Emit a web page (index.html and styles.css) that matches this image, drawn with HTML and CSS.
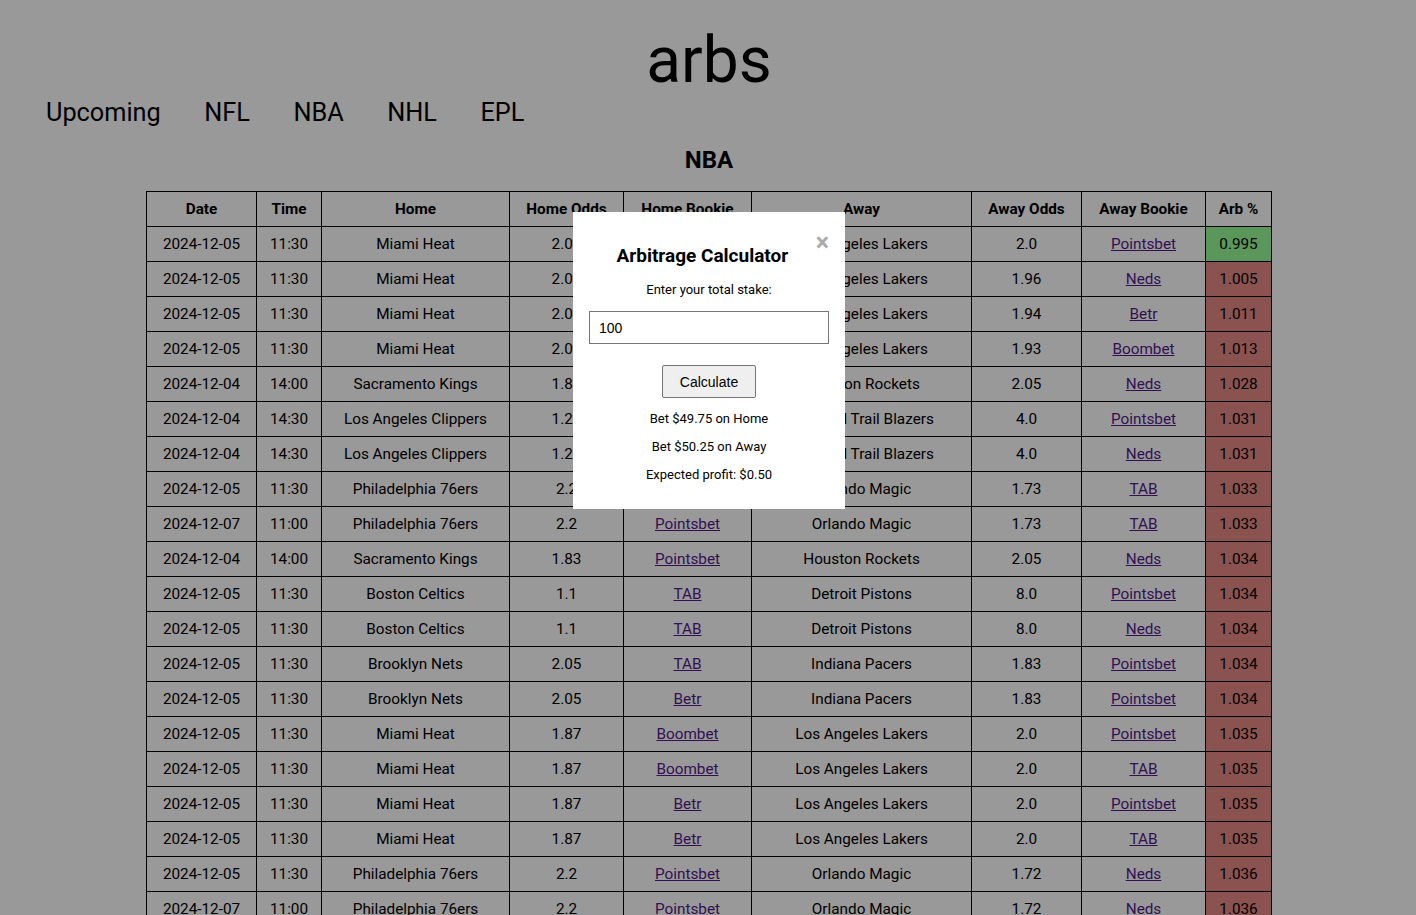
FILE: index.html
```html
<!DOCTYPE html>
<html>
<head>
<meta charset="utf-8">
<title>arbs</title>
<link rel="stylesheet" href="styles.css">
</head>
<body>
<h1 class="title">arbs</h1>
<nav class="nav">
  <a href="#">Upcoming</a>
  <a href="#">NFL</a>
  <a href="#">NBA</a>
  <a href="#">NHL</a>
  <a href="#">EPL</a>
</nav>
<h2 class="league">NBA</h2>
<table class="arbs">
  <colgroup>
    <col class="c-date"><col class="c-time"><col class="c-home"><col class="c-hodds"><col class="c-hbook"><col class="c-away"><col class="c-aodds"><col class="c-abook"><col class="c-arb">
  </colgroup>
  <thead>
    <tr><th>Date</th><th>Time</th><th>Home</th><th>Home Odds</th><th>Home Bookie</th><th>Away</th><th>Away Odds</th><th>Away Bookie</th><th>Arb %</th></tr>
  </thead>
  <tbody>
    <tr><td>2024-12-05</td><td>11:30</td><td>Miami Heat</td><td>2.02</td><td><a href="#">TAB</a></td><td>Los Angeles Lakers</td><td>2.0</td><td><a href="#">Pointsbet</a></td><td class="good">0.995</td></tr>
    <tr><td>2024-12-05</td><td>11:30</td><td>Miami Heat</td><td>2.02</td><td><a href="#">TAB</a></td><td>Los Angeles Lakers</td><td>1.96</td><td><a href="#">Neds</a></td><td class="bad">1.005</td></tr>
    <tr><td>2024-12-05</td><td>11:30</td><td>Miami Heat</td><td>2.02</td><td><a href="#">TAB</a></td><td>Los Angeles Lakers</td><td>1.94</td><td><a href="#">Betr</a></td><td class="bad">1.011</td></tr>
    <tr><td>2024-12-05</td><td>11:30</td><td>Miami Heat</td><td>2.02</td><td><a href="#">TAB</a></td><td>Los Angeles Lakers</td><td>1.93</td><td><a href="#">Boombet</a></td><td class="bad">1.013</td></tr>
    <tr><td>2024-12-04</td><td>14:00</td><td>Sacramento Kings</td><td>1.85</td><td><a href="#">TAB</a></td><td>Houston Rockets</td><td>2.05</td><td><a href="#">Neds</a></td><td class="bad">1.028</td></tr>
    <tr><td>2024-12-04</td><td>14:30</td><td>Los Angeles Clippers</td><td>1.28</td><td><a href="#">TAB</a></td><td>Portland Trail Blazers</td><td>4.0</td><td><a href="#">Pointsbet</a></td><td class="bad">1.031</td></tr>
    <tr><td>2024-12-04</td><td>14:30</td><td>Los Angeles Clippers</td><td>1.28</td><td><a href="#">TAB</a></td><td>Portland Trail Blazers</td><td>4.0</td><td><a href="#">Neds</a></td><td class="bad">1.031</td></tr>
    <tr><td>2024-12-05</td><td>11:30</td><td>Philadelphia 76ers</td><td>2.2</td><td><a href="#">Pointsbet</a></td><td>Orlando Magic</td><td>1.73</td><td><a href="#">TAB</a></td><td class="bad">1.033</td></tr>
    <tr><td>2024-12-07</td><td>11:00</td><td>Philadelphia 76ers</td><td>2.2</td><td><a href="#">Pointsbet</a></td><td>Orlando Magic</td><td>1.73</td><td><a href="#">TAB</a></td><td class="bad">1.033</td></tr>
    <tr><td>2024-12-04</td><td>14:00</td><td>Sacramento Kings</td><td>1.83</td><td><a href="#">Pointsbet</a></td><td>Houston Rockets</td><td>2.05</td><td><a href="#">Neds</a></td><td class="bad">1.034</td></tr>
    <tr><td>2024-12-05</td><td>11:30</td><td>Boston Celtics</td><td>1.1</td><td><a href="#">TAB</a></td><td>Detroit Pistons</td><td>8.0</td><td><a href="#">Pointsbet</a></td><td class="bad">1.034</td></tr>
    <tr><td>2024-12-05</td><td>11:30</td><td>Boston Celtics</td><td>1.1</td><td><a href="#">TAB</a></td><td>Detroit Pistons</td><td>8.0</td><td><a href="#">Neds</a></td><td class="bad">1.034</td></tr>
    <tr><td>2024-12-05</td><td>11:30</td><td>Brooklyn Nets</td><td>2.05</td><td><a href="#">TAB</a></td><td>Indiana Pacers</td><td>1.83</td><td><a href="#">Pointsbet</a></td><td class="bad">1.034</td></tr>
    <tr><td>2024-12-05</td><td>11:30</td><td>Brooklyn Nets</td><td>2.05</td><td><a href="#">Betr</a></td><td>Indiana Pacers</td><td>1.83</td><td><a href="#">Pointsbet</a></td><td class="bad">1.034</td></tr>
    <tr><td>2024-12-05</td><td>11:30</td><td>Miami Heat</td><td>1.87</td><td><a href="#">Boombet</a></td><td>Los Angeles Lakers</td><td>2.0</td><td><a href="#">Pointsbet</a></td><td class="bad">1.035</td></tr>
    <tr><td>2024-12-05</td><td>11:30</td><td>Miami Heat</td><td>1.87</td><td><a href="#">Boombet</a></td><td>Los Angeles Lakers</td><td>2.0</td><td><a href="#">TAB</a></td><td class="bad">1.035</td></tr>
    <tr><td>2024-12-05</td><td>11:30</td><td>Miami Heat</td><td>1.87</td><td><a href="#">Betr</a></td><td>Los Angeles Lakers</td><td>2.0</td><td><a href="#">Pointsbet</a></td><td class="bad">1.035</td></tr>
    <tr><td>2024-12-05</td><td>11:30</td><td>Miami Heat</td><td>1.87</td><td><a href="#">Betr</a></td><td>Los Angeles Lakers</td><td>2.0</td><td><a href="#">TAB</a></td><td class="bad">1.035</td></tr>
    <tr><td>2024-12-05</td><td>11:30</td><td>Philadelphia 76ers</td><td>2.2</td><td><a href="#">Pointsbet</a></td><td>Orlando Magic</td><td>1.72</td><td><a href="#">Neds</a></td><td class="bad">1.036</td></tr>
    <tr><td>2024-12-07</td><td>11:00</td><td>Philadelphia 76ers</td><td>2.2</td><td><a href="#">Pointsbet</a></td><td>Orlando Magic</td><td>1.72</td><td><a href="#">Neds</a></td><td class="bad">1.036</td></tr>
  </tbody>
</table>

<div class="overlay">
  <div class="modal">
    <span class="close">&times;</span>
    <h3 class="modal-title">Arbitrage Calculator</h3>
    <p class="modal-label">Enter your total stake:</p>
    <input class="stake" type="text" value="100">
    <button class="calc" type="button">Calculate</button>
    <p class="result">Bet $49.75 on Home</p>
    <p class="result">Bet $50.25 on Away</p>
    <p class="result">Expected profit: $0.50</p>
  </div>
</div>
</body>
</html>
```

FILE: styles.css
```css
html, body {
  margin: 0;
  padding: 0;
}
body {
  background: #fff;
  font-family: Roboto, "Liberation Sans", Arial, sans-serif;
  color: #000;
  height: 915px;
  overflow: hidden;
  padding-left: 2px;
}
.title {
  font-size: 64px;
  font-weight: 400;
  text-align: center;
  margin: 23px 0 0;
  line-height: 75px;
}
.nav {
  display: flex;
  gap: 43.5px;
  padding-left: 44px;
  margin-top: -1px;
}
.nav a {
  font-size: 25.3px;
  line-height: 31px;
  color: #000;
  text-decoration: none;
}
.league {
  font-size: 24px;
  font-weight: 700;
  text-align: center;
  line-height: 28px;
  margin: 18px 0 17px;
}
.arbs {
  border-collapse: collapse;
  table-layout: fixed;
  width: 1125px;
  margin: 0 auto;
  font-size: 15.3px;
}
.c-date { width: 110px; }
.c-time { width: 65px; }
.c-home { width: 188px; }
.c-hodds { width: 114px; }
.c-hbook { width: 128px; }
.c-away { width: 220px; }
.c-aodds { width: 110px; }
.c-abook { width: 124px; }
.c-arb { width: 66px; }
.arbs th,
.arbs td {
  border: 1px solid #000;
  text-align: center;
  height: 34px;
  padding: 0 4px;
  line-height: 18px;
  white-space: nowrap;
  overflow: hidden;
}
.arbs th {
  font-weight: 700;
}
.arbs a {
  color: #551a8b;
  text-decoration: underline;
}
.good { background: #98fb98; }
.bad { background: #e68a85; }

.overlay {
  position: fixed;
  inset: 0;
  padding-left: 2px;
  background: rgba(0, 0, 0, 0.4);
}
.modal {
  background: #fff;
  width: 240px;
  margin: 212px auto 0;
  padding: 16px 16px 14px;
  font-size: 13px;
  text-align: center;
  font-family: Roboto, "Liberation Sans", Arial, sans-serif;
}
.close {
  float: right;
  margin-top: 3px;
  font-size: 25px;
  line-height: 24px;
  font-weight: 700;
  color: #aaa;
}
.modal-title {
  font-size: 19px;
  font-weight: 700;
  margin: 17px 0 0;
  line-height: 22px;
}
.modal-label {
  margin: 15px 0 14px;
  line-height: 15px;
}
.stake {
  display: block;
  box-sizing: border-box;
  width: 240px;
  height: 33px;
  padding: 0 9px;
  border: 1px solid #767676;
  font-family: "Liberation Sans", Arial, sans-serif;
  font-size: 14px;
  margin: 0;
}
.calc {
  display: block;
  margin: 21px auto 0;
  height: 33px;
  width: 94px;
  padding: 0;
  background: #efefef;
  border: 1px solid #767676;
  border-radius: 2px;
  font-family: "Liberation Sans", Arial, sans-serif;
  font-size: 14px;
  color: #000;
}
.result {
  margin: 13px 0;
  line-height: 15px;
}
```
